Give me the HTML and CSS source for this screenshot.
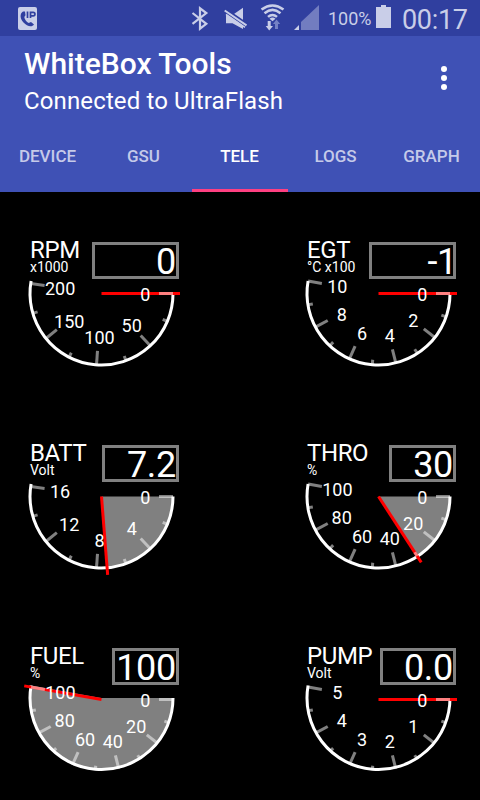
FILE: index.html
```html
<!DOCTYPE html>
<html lang="en">
<head>
<meta charset="utf-8">
<title>WhiteBox Tools</title>
<link rel="stylesheet" href="styles.css">
</head>
<body>
<div class="status">
  <svg class="call" width="19" height="23" viewBox="0 0 19 23"><rect width="19" height="23" rx="2" fill="#c9cee8"/><path d="M5 4.500C1.500 6.500 2 12 5.500 15.500C9 19.500 14 20.500 16 17.500L13 15L10.700 16C8.500 15 6.500 12 6.300 10L7.500 8.200L7 4.500Z" fill="#303f9f"/><path d="M9.500 4.500V11M12.500 11V5.300H15.200A1.700 1.700 0 0 1 15.200 8.800H12.500" fill="none" stroke="#303f9f" stroke-width="1.700"/></svg>
  <svg class="icons" width="140" height="36" viewBox="0 0 140 36" fill="#c9cee8">
    <path d="M3.500 13L17.300 23.800L11 28.700V8.300L17.300 13L3.500 23.800" fill="none" stroke="#c9cee8" stroke-width="2.200"/>
    <path d="M37 15H43.500L54 7.800V29L43.500 23.300H37Z"/>
    <path d="M35 9.800L58 25.500" stroke="#303f9f" stroke-width="5"/>
    <path d="M35.700 10.500L57.500 25.300" stroke="#c9cee8" stroke-width="2"/>
    <path d="M37 14.300L56 27.300" stroke="#c9cee8" stroke-width="1.600"/>
    <path d="M72.500 9.500Q83.500 1.500 94.500 9.500M75.500 13.200Q83.500 6.500 91.500 13.200M79 16.900Q83.500 13 88 16.900" fill="none" stroke="#c9cee8" stroke-width="2.500"/>
    <path d="M80.500 18.700Q83.500 16.500 86.500 18.700L83.500 21.300Z"/>
    <path d="M78.700 21H81.700V26H84L80.200 30.500L76.700 26H78.700Z"/>
    <path d="M86 29H89V24H91.200L87.500 19.500L84 24H86Z" fill="#7581c5"/>
    <path d="M112 22L130 5V30H112Z" fill="#727dc0"/><path d="M105 30L110 25V30Z"/>
  </svg>
  <span class="percent">100%</span>
  <svg class="battery" width="15" height="23" viewBox="0 0 15 23"><path d="M0 2H5V0H10V2H15V23H0Z" fill="#c9cee8"/></svg>
  <span class="clock">00:17</span>
</div>
<header class="appbar">
  <div class="heading">
    <div>
      <h1>WhiteBox Tools</h1>
      <p>Connected to UltraFlash</p>
    </div>
    <svg class="more" width="6" height="24" viewBox="0 0 6 24" fill="#fff"><circle cx="3" cy="3" r="3"/><circle cx="3" cy="12" r="3"/><circle cx="3" cy="21" r="3"/></svg>
  </div>
  <nav class="tabs">
    <span>DEVICE</span><span>GSU</span><span class="active">TELE</span><span>LOGS</span><span>GRAPH</span>
  </nav>
</header>
<main class="gauges" id="gauges"></main>
<script src="gauges.js"></script>
</body>
</html>
```
FILE: styles.css
```css
* { box-sizing: border-box; }
body { margin: 0; width: 480px; height: 800px; overflow: hidden; background: #000; color: #fff; font-family: Roboto, sans-serif; }
svg { display: block; }
.status { height: 36px; background: #303f9f; color: #c9cee8; display: flex; align-items: flex-start; padding-left: 18px; }
.call { margin-top: 7px; }
.icons { margin-left: 152px; }
.percent { font-size: 18px; line-height: 22px; margin: 8px 0 0 -1px; width: 48px; white-space: nowrap; }
.battery { margin-top: 5px; }
.clock { font-size: 27px; line-height: 32px; letter-spacing: -0.3px; margin: 4px 0 0 11px; white-space: nowrap; }
.appbar { height: 156px; background: #3f51b5; }
.heading { height: 84px; padding: 10px 33px 0 24px; display: flex; justify-content: space-between; }
h1 { margin: 0; font-size: 30px; font-weight: 500; line-height: 36px; }
.heading p { margin: 4px 0 0; font-size: 24px; line-height: 30px; letter-spacing: 0.13px; }
.more { margin-top: 20px; }
.tabs { height: 72px; display: grid; grid-template-columns: repeat(5, 96px); grid-template-rows: 72px; }
.tabs span { height: 72px; padding-right: 1px; text-align: center; font-size: 17px; font-weight: 500; line-height: 72px; color: #c5cae9; }
.tabs .active { color: #fff; box-shadow: inset 0 -3px #ff4081; }
.gauges { display: grid; height: 608px; overflow: hidden; grid-template-columns: 150px 150px; grid-template-rows: 203px 203px 150px; column-gap: 127px; padding: 50px 0 0 29px; }
.head { display: flex; justify-content: space-between; height: 37px; }
.name { font-size: 24px; line-height: 16px; letter-spacing: -0.4px; white-space: nowrap; padding-left: 1px; }
.unit { font-size: 14px; line-height: 18px; white-space: nowrap; padding-left: 1px; }
.value { height: 37px; border: 3px solid #808080; font-size: 36px; line-height: 34px; letter-spacing: -0.3px; text-align: right; }
.dial { overflow: visible; }
.dial text { font-size: 18px; fill: #fff; text-anchor: middle; }
```
FILE: gauges.js
```
const gauges = [
  { name: 'RPM', unit: 'x1000', value: '0', box: 87, turn: 0, labels: [0, 50, 100, 150, 200] },
  { name: 'EGT', unit: '°C x100', value: '-1', box: 87, nudge: 4, turn: 0, labels: [0, 2, 4, 6, 8, 10] },
  { name: 'BATT', unit: 'Volt', value: '7.2', box: 77, turn: 85.5, labels: [0, 4, 8, 12, 16] },
  { name: 'THRO', unit: '%', value: '30', box: 67, turn: 57, labels: [0, 20, 40, 60, 80, 100] },
  { name: 'FUEL', unit: '%', value: '100', box: 67, turn: 190, labels: [0, 20, 40, 60, 80, 100], lift: 1.5 },
  { name: 'PUMP', unit: 'Volt', value: '0.0', box: 76, turn: 0, labels: [0, 1, 2, 3, 4, 5], lift: 1.5 }
];
const CX = 72.5, CY = 14.5;
const at = (r, deg, lift = 0) => {
  const a = deg * Math.PI / 180;
  return [(CX + r * Math.cos(a)).toFixed(2), (CY - lift + r * Math.sin(a)).toFixed(2)];
};
const line = (r1, r2, deg, color) =>
  `<path d="M${at(r1, deg)}L${at(r2, deg)}" stroke="${color}" stroke-width="3"/>`;
function dial(g) {
  const lift = g.lift || 0;
  const step = Math.floor(190 / (g.labels.length - 1));
  let s = '';
  if (g.turn) s += `<path d="M${at(0, 0, lift)}L${at(71.5, 0, lift)}A71.5 71.5 0 ${g.turn > 180 ? 1 : 0} 1 ${at(71.5, g.turn, lift)}Z" fill="#808080"/>`;
  s += `<path d="M${at(71.5, 0, lift)}A71.5 71.5 0 1 1 ${at(71.5, 190, lift)}" fill="none" stroke="#fff" stroke-width="3"/>`;
  s += line(0, 78.5, g.turn, '#f00');
  g.labels.forEach((label, i) => {
    s += line(57.5, 71.5, i * step, '#ffffff80');
    if (i < g.labels.length - 1) s += line(66.5, 71, i * step + Math.floor(step / 2), '#ffffff80');
    const [x, y] = at(42.8, i * step);
    s += `<text x="${+x + 1}" y="${+y + 7.3}">${label}</text>`;
  });
  return `<svg class="dial" width="150" height="90" viewBox="0 0 150 90">${s}</svg>`;
}
document.getElementById('gauges').innerHTML = gauges.map(g =>
  `<section><div class="head"><div><div class="name">${g.name}</div><div class="unit">${g.unit}</div></div><div class="value" style="width:${g.box}px;text-indent:${g.nudge || 0}px;padding-right:0;margin-right:0"><span style="margin-right:${-(g.nudge || 0)}px">${g.value}</span></div></div>${dial(g)}</section>`
).join('');
```
